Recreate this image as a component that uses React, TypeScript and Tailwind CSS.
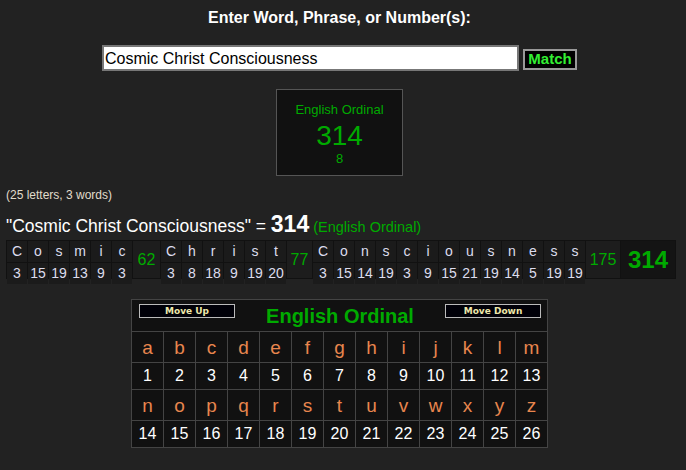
import React from 'react';

const words: { letters: [string, number][]; total: number; w: string }[] = [
  {
    letters: [['C', 3], ['o', 15], ['s', 19], ['m', 13], ['i', 9], ['c', 3]],
    total: 62,
    w: 'w-[27px]',
  },
  {
    letters: [['C', 3], ['h', 8], ['r', 18], ['i', 9], ['s', 19], ['t', 20]],
    total: 77,
    w: 'w-[25px]',
  },
  {
    letters: [
      ['C', 3], ['o', 15], ['n', 14], ['s', 19], ['c', 3], ['i', 9], ['o', 15],
      ['u', 21], ['s', 19], ['n', 14], ['e', 5], ['s', 19], ['s', 19],
    ],
    total: 175,
    w: 'w-[34px]',
  },
];

const alphabet = 'abcdefghijklmnopqrstuvwxyz'.split('');

const Breakdown = () => (
  <div className="ml-[6px] mt-[4px] flex h-[39px] w-[670px] gap-px bg-[#111] p-px">
    {words.map((word, wi) => (
      <React.Fragment key={wi}>
        {word.letters.map(([ch, n], i) => (
          <div key={i} className="flex w-[20px] flex-col gap-px">
            <div className="flex flex-1 items-center justify-center bg-[#1b1b1b] text-[14px] text-[#dde]">{ch}</div>
            <div className="flex flex-1 items-center justify-center bg-[#1b1b1b] text-[14px] text-[#dde]">{n}</div>
          </div>
        ))}
        <div className={`${word.w} flex items-center justify-center bg-[#1d1d1d] text-[16px] text-[#0a0]`}>
          {word.total}
        </div>
      </React.Fragment>
    ))}
    <div className="flex flex-1 items-center justify-center bg-[#141414] text-[24px] font-bold text-[#0a0]">314</div>
  </div>
);

const MoveButton = ({ label }: { label: string }) => (
  <div className="flex h-[14px] w-[96px] items-center justify-center border border-[#bbb] bg-[#000008] font-['DejaVu_Sans',sans-serif] text-[9px] font-bold leading-none text-[#eee8aa]">
    {label}
  </div>
);

const CipherTable = () => {
  const rows = [alphabet.slice(0, 13), alphabet.slice(13)];
  return (
    <table className="mx-auto mt-[20px] table-fixed border-collapse border border-[#444] bg-[#111]">
      <tbody>
        <tr className="h-[32px]">
          <td colSpan={13} className="border border-[#444] px-[7px] pr-[6px] align-top">
            <div className="flex items-start justify-between pt-[4px]">
              <MoveButton label="Move Up" />
              <div className="text-[20px] font-bold leading-[24px] text-[#0a0]">English Ordinal</div>
              <MoveButton label="Move Down" />
            </div>
          </td>
        </tr>
        {rows.map((row, ri) => (
          <React.Fragment key={ri}>
            <tr className="h-[31px]">
              {row.map(l => (
                <td key={l} className="w-[32px] border border-[#444] text-center text-[19px] leading-none text-[#e8864e]">
                  {l}
                </td>
              ))}
            </tr>
            <tr className="h-[27px]">
              {row.map((l, i) => (
                <td key={l} className="w-[32px] border border-[#444] text-center text-[16px] leading-none text-white">
                  {ri * 13 + i + 1}
                </td>
              ))}
            </tr>
          </React.Fragment>
        ))}
      </tbody>
    </table>
  );
};

export default function App() {
  return (
    <div className="h-[470px] w-[686px] overflow-hidden bg-[#222] font-['Liberation_Sans',Arial,sans-serif]">
      <div className="w-[679px]">
        <div className="pt-[9px] text-center text-[16px] font-bold leading-[18px] text-white">
          Enter Word, Phrase, or Number(s):
        </div>

        <div className="mt-[18px] flex items-center justify-center gap-[4px]">
          <input
            readOnly
            value="Cosmic Christ Consciousness"
            className="h-[26px] w-[417px] border-2 border-[#777] bg-white px-[1px] pt-[2px] text-[16px] leading-none text-black outline-none"
          />
          <button className="mt-[2px] flex h-[21px] w-[54px] items-center justify-center border-2 border-[#999] bg-black text-[15px] font-bold text-[#3e3]">
            Match
          </button>
        </div>

        <div className="mx-auto mt-[18px] flex h-[87px] w-[127px] flex-col items-center border border-[#555] bg-[#111] text-[#0a0]">
          <div className="pt-[13px] text-[13px] leading-[14px]">English Ordinal</div>
          <div className="mt-[4px] text-[28px] leading-[30px]">314</div>
          <div className="mt-[1px] text-[13px] leading-[14px]">8</div>
        </div>

        <div className="mt-[12px] pl-[6px] text-[12px] leading-[14px] text-[#e0dccb]">(25 letters, 3 words)</div>

        <div className="mt-[10px] flex h-[24px] items-baseline whitespace-pre pl-[6px] text-[17.5px] leading-[24px] text-white">
          <span>"Cosmic Christ Consciousness" = </span>
          <span className="text-[23px] font-bold">314</span>
          <span className="text-[14.5px] text-[#0a0]"> (English Ordinal)</span>
        </div>

        <Breakdown />

        <CipherTable />
      </div>
    </div>
  );
}
